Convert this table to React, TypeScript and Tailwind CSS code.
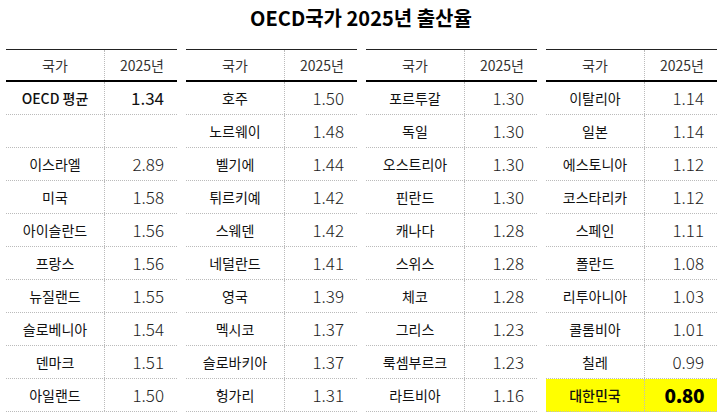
import React from "react";

type Row = { name: string; value: string; strong?: boolean; highlight?: boolean };

const tables: Row[][] = [
  [
    { name: "OECD 평균", value: "1.34", strong: true },
    { name: "", value: "" },
    { name: "이스라엘", value: "2.89" },
    { name: "미국", value: "1.58" },
    { name: "아이슬란드", value: "1.56" },
    { name: "프랑스", value: "1.56" },
    { name: "뉴질랜드", value: "1.55" },
    { name: "슬로베니아", value: "1.54" },
    { name: "덴마크", value: "1.51" },
    { name: "아일랜드", value: "1.50" },
  ],
  [
    { name: "호주", value: "1.50" },
    { name: "노르웨이", value: "1.48" },
    { name: "벨기에", value: "1.44" },
    { name: "튀르키예", value: "1.42" },
    { name: "스웨덴", value: "1.42" },
    { name: "네덜란드", value: "1.41" },
    { name: "영국", value: "1.39" },
    { name: "멕시코", value: "1.37" },
    { name: "슬로바키아", value: "1.37" },
    { name: "헝가리", value: "1.31" },
  ],
  [
    { name: "포르투갈", value: "1.30" },
    { name: "독일", value: "1.30" },
    { name: "오스트리아", value: "1.30" },
    { name: "핀란드", value: "1.30" },
    { name: "캐나다", value: "1.28" },
    { name: "스위스", value: "1.28" },
    { name: "체코", value: "1.28" },
    { name: "그리스", value: "1.23" },
    { name: "룩셈부르크", value: "1.23" },
    { name: "라트비아", value: "1.16" },
  ],
  [
    { name: "이탈리아", value: "1.14" },
    { name: "일본", value: "1.14" },
    { name: "에스토니아", value: "1.12" },
    { name: "코스타리카", value: "1.12" },
    { name: "스페인", value: "1.11" },
    { name: "폴란드", value: "1.08" },
    { name: "리투아니아", value: "1.03" },
    { name: "콜롬비아", value: "1.01" },
    { name: "칠레", value: "0.99" },
    { name: "대한민국", value: "0.80", highlight: true },
  ],
];

function RateTable({ rows }: { rows: Row[] }) {
  return (
    <div className="w-[171px] border-t border-[#222]">
      <div className="flex h-[32px] border-b-2 border-black text-[14px] text-[#333]">
        <div className="flex w-[99px] items-center justify-center border-r border-dotted border-[#bbb]">
          국가
        </div>
        <div className="flex flex-1 items-center justify-end pr-[13px]">2025년</div>
      </div>
      {rows.map((row, i) => (
        <div
          key={i}
          className={
            "flex h-[33px] border-b border-dotted border-[#bbb] " +
            (row.highlight ? "bg-[#ffff00]" : "")
          }
        >
          <div
            className={
              "flex w-[99px] items-center justify-center border-r border-dotted border-[#bbb] text-[14px] text-[#111] " +
              (row.strong || row.highlight ? "font-medium" : "")
            }
          >
            {row.name}
          </div>
          <div
            className={
              "flex flex-1 items-center justify-end pr-[13px] " +
              (row.highlight
                ? "font-black tracking-[-0.5px] text-black text-[19px]"
                : row.strong
                ? "text-[17px] font-normal text-[#111]"
                : "text-[17px] font-light text-[#222]")
            }
          >
            {row.value}
          </div>
        </div>
      ))}
    </div>
  );
}

export default function App() {
  return (
    <div className="h-[418px] w-[722px] bg-white font-['Noto_Sans_CJK_KR','Noto_Sans',sans-serif]">
      <h1 className="pt-[4px] text-center text-[20px] font-bold leading-[28px] text-black">
        OECD국가 2025년 출산율
      </h1>
      <div className="mt-[17px] flex gap-[9px] pl-[6px]">
        {tables.map((rows, i) => (
          <RateTable key={i} rows={rows} />
        ))}
      </div>
    </div>
  );
}
